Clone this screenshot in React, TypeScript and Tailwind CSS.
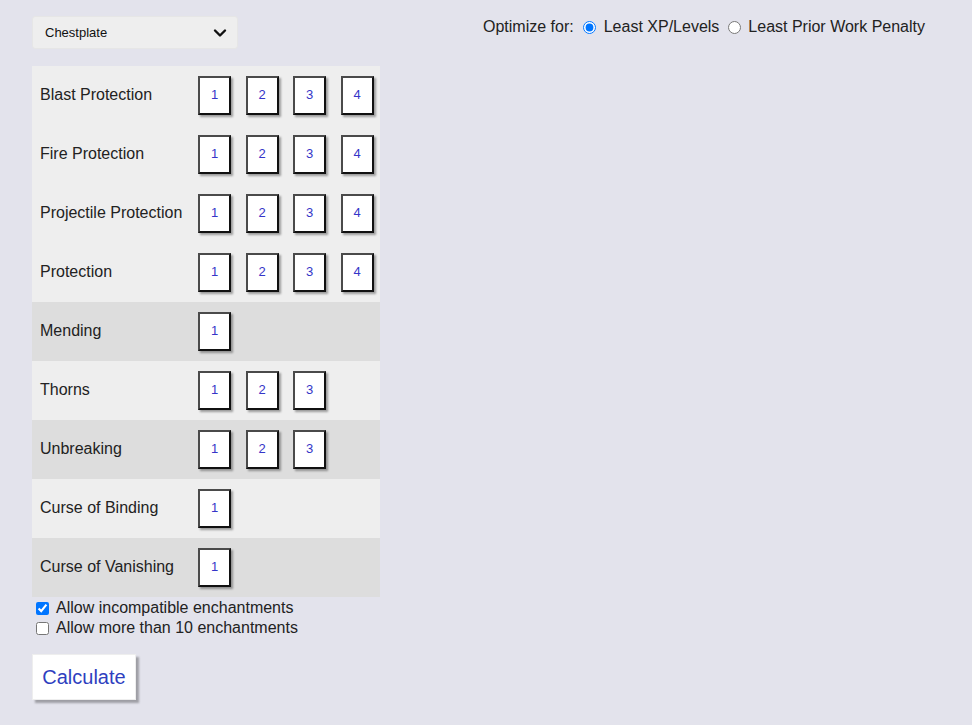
import React from "react";

const rows: { name: string; levels: number; bg: string }[] = [
  { name: "Blast Protection", levels: 4, bg: "bg-[#eeeeee]" },
  { name: "Fire Protection", levels: 4, bg: "bg-[#eeeeee]" },
  { name: "Projectile Protection", levels: 4, bg: "bg-[#eeeeee]" },
  { name: "Protection", levels: 4, bg: "bg-[#eeeeee]" },
  { name: "Mending", levels: 1, bg: "bg-[#dddddd]" },
  { name: "Thorns", levels: 3, bg: "bg-[#eeeeee]" },
  { name: "Unbreaking", levels: 3, bg: "bg-[#dddddd]" },
  { name: "Curse of Binding", levels: 1, bg: "bg-[#eeeeee]" },
  { name: "Curse of Vanishing", levels: 1, bg: "bg-[#dddddd]" },
];

function LevelBox({ n }: { n: number }) {
  return (
    <div className="w-[33px] h-[39px] bg-white border-2 border-l-[#4a4a4a] border-t-[#4a4a4a] border-r-[#111] border-b-[#111] shadow-[2px_2px_2px_rgba(0,0,0,0.35)] flex items-center justify-center text-[13px] text-[#3535c8]">
      {n}
    </div>
  );
}

export default function App() {
  return (
    <div
      className="min-h-[725px] w-full bg-[#e3e3ec] text-[#222] pl-[32px] pt-[16px]"
      style={{ fontFamily: '"Liberation Sans", Arial, sans-serif' }}
    >
      <div className="flex items-start justify-between pr-[47px]">
        <div className="w-[206px] h-[33px] bg-[#eeeeee] rounded-[3px] border border-[#e6e6e6] flex items-center justify-between pl-[12px] pr-[10px] text-[13px] text-[#111]">
          <span>Chestplate</span>
          <svg width="14" height="10" viewBox="0 0 14 10">
            <path d="M2 2.5 L7 7.5 L12 2.5" fill="none" stroke="#111" strokeWidth="2.4" strokeLinecap="round" strokeLinejoin="round" />
          </svg>
        </div>
        <div className="flex items-center text-[16px] mt-[1px] h-[20px]">
          <span>Optimize for:</span>
          <input type="radio" name="opt" defaultChecked className="ml-[9px] mr-[8px] w-[13px] h-[13px] accent-[#0075ff]" />
          <span>Least XP/Levels</span>
          <input type="radio" name="opt" className="ml-[9px] mr-[7px] w-[13px] h-[13px]" />
          <span>Least Prior Work Penalty</span>
        </div>
      </div>

      <div className="w-[348px] mt-[17px]">
        {rows.map((r) => (
          <div key={r.name} className={`h-[59px] flex items-center ${r.bg}`}>
            <div className="w-[166px] pl-[8px] text-[16px] -mt-[2px]">{r.name}</div>
            <div className="flex gap-[14.5px] -mt-[1px]">
              {Array.from({ length: r.levels }, (_, i) => (
                <LevelBox key={i} n={i + 1} />
              ))}
            </div>
          </div>
        ))}
      </div>

      <div className="text-[16px] mt-[1px]">
        <label className="flex items-center h-[20px]">
          <input type="checkbox" defaultChecked className="ml-[4px] mr-[7px] w-[13px] h-[13px] accent-[#0075ff]" />
          <span>Allow incompatible enchantments</span>
        </label>
        <label className="flex items-center h-[20px]">
          <input type="checkbox" className="ml-[4px] mr-[7px] w-[13px] h-[13px]" />
          <span>Allow more than 10 enchantments</span>
        </label>
      </div>

      <button className="mt-[16px] w-[104px] h-[46px] bg-white text-[20px] text-[#2f3fbf] shadow-[3px_3px_2px_rgba(0,0,0,0.3)] border border-[#eee] flex items-center justify-center">
        Calculate
      </button>
    </div>
  );
}
